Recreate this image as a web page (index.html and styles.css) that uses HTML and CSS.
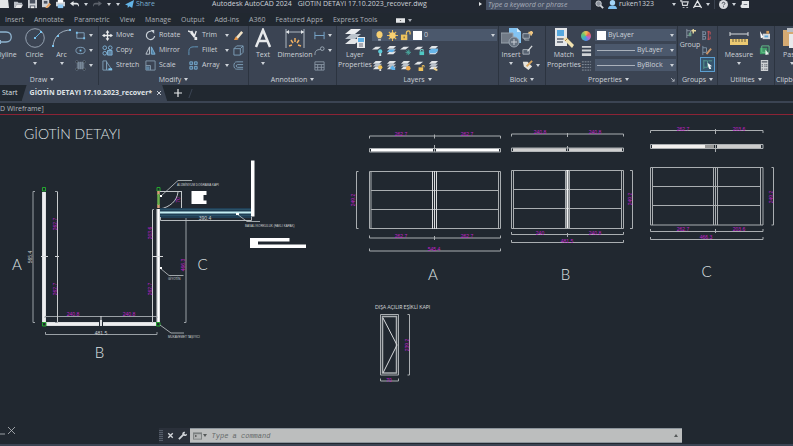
FILE: index.html
```html
<!DOCTYPE html>
<html lang="en">
<head>
<meta charset="utf-8">
<meta name="viewport" content="width=device-width, initial-scale=1">
<title>Autodesk AutoCAD 2024</title>
<link rel="stylesheet" href="styles.css">
</head>
<body>
<svg class="sprite" aria-hidden="true">
  <symbol id="caret" viewBox="0 0 4 3"><path d="M0 0h4L2 3z" fill="currentColor"/></symbol>
  <symbol id="sheets" viewBox="0 0 12 12"><path d="M1 4l3-3h7L8 4z" fill="#e2e5e8"/><path d="M1 7l3-3h7L8 7z" fill="#b9c1ca"/><path d="M1 10l3-3h7l-3 3z" fill="#e2e5e8"/></symbol>
  <symbol id="sheet" viewBox="0 0 12 12"><path d="M0 5l4-3h6L6 5z" fill="#e2e5e8"/></symbol>
  <symbol id="bulb" viewBox="0 0 10 12"><path d="M5 1a4 4 0 0 0-2 7v1h4V8a4 4 0 0 0-2-7z" fill="#f6cf72"/><path d="M3.500 10h3v1.500h-3z" fill="#d0d3d6"/></symbol>
  <symbol id="lock" viewBox="0 0 12 12"><path d="M1 5h7v6H1z" fill="#eec35c"/><path d="M7 5V3a2 2 0 0 1 4 0v2" fill="none" stroke="#eec35c" stroke-width="1.400"/><path d="M4 7h1v2H4z" fill="#444"/></symbol>
  <symbol id="sun" viewBox="0 0 12 12"><path d="M6 0v12M0 6h12M2 2l8 8M10 2l-8 8" stroke="#eabb58" stroke-width="1.200"/><circle cx="6" cy="6" r="3.500" fill="#f6cf72"/></symbol>
</svg>

<div class="app">
  <header class="titlebar">
    <div class="quick">
      <button aria-label="New"><svg viewBox="0 0 10 10"><path d="M0 0h9l1 9H0z" fill="#e4e6e8"/></svg></button>
      <button aria-label="Open"><svg viewBox="0 0 10 10"><path d="M0 2h4l1 1h4v2H3L1 9H0z" fill="#b9bec5"/><path d="M3 5h7L8 9H1z" fill="#e8e9eb"/></svg></button>
      <button aria-label="Save"><svg viewBox="0 0 10 10"><path d="M0 0h10v9H0z" fill="#cdd1d6"/><path d="M2 0h6v4H2zM2 6h6v3H2z" fill="#4a5260"/><path d="M3 7h4v2H3z" fill="#eee"/></svg></button>
      <button aria-label="Save as"><svg viewBox="0 0 10 10"><path d="M0 0h8v8H0z" fill="#cdd1d6"/><path d="M2 1h4v3H2z" fill="#4a5260"/><path d="M4 8l4-5 2 2-4 4H4z" fill="#e8a565"/></svg></button>
      <button aria-label="Plot"><svg viewBox="0 0 10 10"><path d="M0 2h10v5H0z" fill="#cdd1d6"/><path d="M2 0h6v3H2z" fill="#fff"/><path d="M2 5h6v4H2z" fill="#8fc8f2"/></svg></button>
      <button aria-label="Undo"><svg viewBox="0 0 10 10"><path d="M0 4l4-3v2h3c2 0 3 1 3 4H9c0-2-1-2-2-2H4v2z" fill="#e4e6e8"/></svg></button>
      <svg class="caret"><use href="#caret"/></svg>
      <button class="dim" aria-label="Redo"><svg viewBox="0 0 10 10"><path d="M10 4L6 1v2H3C1 3 0 4 0 7h1c0-2 1-2 2-2h3v2z" fill="#b0b5bd"/></svg></button>
      <svg class="caret"><use href="#caret"/></svg>
      <svg class="caret"><use href="#caret"/></svg>
      <button class="share"><svg viewBox="0 0 10 10"><path d="M0 5l10-5-2 9-3-2-2 2V6z" fill="#63b3e6"/></svg>Share</button>
    </div>
    <div class="doc-title"><span>Autodesk AutoCAD 2024</span><span>GİOTİN DETAYI 17.10.2023_recover.dwg</span></div>
    <div class="account">
      <svg class="play" viewBox="0 0 3 4"><path d="M0 0l3 2-3 2z" fill="#e4e6e8"/></svg>
      <input type="text" aria-label="Search help" placeholder="Type a keyword or phrase">
      <button aria-label="Search"><svg viewBox="0 0 10 10"><circle cx="4" cy="4" r="3" fill="#8b919b" stroke="#d5d8dc"/><path d="M6 6l3 3" stroke="#d5d8dc" stroke-width="2"/></svg></button>
      <button class="user"><svg viewBox="0 0 10 10"><circle cx="5" cy="3" r="3" fill="#a3d4f7"/><path d="M0 10c0-3 2-4 5-4s5 1 5 4z" fill="#7fc0f0"/></svg>ruken1323</button>
      <svg class="caret"><use href="#caret"/></svg>
      <button aria-label="Store"><svg viewBox="0 0 10 10"><path d="M0 1h2l1 5h5l1-4H3" fill="none" stroke="#d5d8dc" stroke-width="1.300"/><path d="M3 8h2v1H3zM7 8h2v1H7z" fill="#d5d8dc"/></svg></button>
      <button aria-label="Apps"><svg viewBox="0 0 10 10"><path d="M1 8l4-7 4 7-2-1H3z" fill="none" stroke="#e4e6e8" stroke-width="1.400"/></svg></button>
      <svg class="caret"><use href="#caret"/></svg>
      <span class="rule"></span>
      <button aria-label="Help"><svg viewBox="0 0 10 10"><circle cx="5" cy="5" r="5" fill="#d8dade"/><path d="M3.500 4c0-2 3-2 3 0 0 1-1.500 1-1.500 2M5 7v1" fill="none" stroke="#333a45"/></svg></button>
      <svg class="caret"><use href="#caret"/></svg>
      <button aria-label="Messages"><svg viewBox="0 0 10 10"><path d="M2 1h8v8H3C0 9 0 5 2 5z" fill="#e4e6e8"/><path d="M4 5h4" stroke="#6a717c"/></svg></button>
    </div>
  </header>

  <nav class="menu">
    <a href="#">Insert</a><a href="#">Annotate</a><a href="#">Parametric</a><a href="#">View</a><a href="#">Manage</a><a href="#">Output</a><a href="#">Add-ins</a><a href="#">A360</a><a href="#">Featured Apps</a><a href="#">Express Tools</a>
    <button aria-label="Ribbon display"><svg class="ribbon-mode" viewBox="0 0 10 5"><path d="M0 0h10v5H0z" fill="#e4e6e8"/><path d="M4 3l1-1 1 1z" fill="#333"/></svg><svg class="caret"><use href="#caret"/></svg></button>
  </nav>

  <div class="ribbon">
    <section class="panel draw">
      <div class="tools">
        <button class="big"><svg viewBox="0 0 20 20"><path d="M0 4h12c7 0 7 10 0 10H4" fill="none" stroke="#8fb4d0" stroke-width="1.300"/><path d="M3 12h4v4H3z" fill="#8fb4d0"/></svg>Polyline</button>
        <button class="big"><svg viewBox="0 0 20 20"><circle cx="10" cy="10" r="9.300" fill="none" stroke="#a9b8c6" stroke-width=".8"/><path d="M10 10l6-6" stroke="#5eacdc"/><path d="M9 9h2v2H9zM15 3h2v2h-2z" fill="#79c2ee"/></svg>Circle<svg class="caret"><use href="#caret"/></svg></button>
        <button class="big"><svg viewBox="0 0 20 20"><path d="M1 18C2 9 8 2 19 2" fill="none" stroke="#a9b8c6" stroke-width=".9"/><path d="M0 17h2v2H0zM5 7h2v2H5zM17 1h2v2h-2z" fill="#79c2ee"/></svg>Arc<svg class="caret"><use href="#caret"/></svg></button>
        <div class="stack">
          <button class="tool" aria-label="Rectangle"><svg viewBox="0 0 12 12"><path d="M2 3h8v6H2z" fill="none" stroke="#84a5bf"/><path d="M1 2h2v2H1zM9 8h2v2H9z" fill="#79c2ee"/></svg><svg class="caret"><use href="#caret"/></svg></button>
          <button class="tool" aria-label="Ellipse"><svg viewBox="0 0 12 12"><ellipse cx="6" cy="6" rx="5" ry="3.500" fill="none" stroke="#84a5bf"/><path d="M5 5h2v2H5z" fill="#79c2ee"/></svg><svg class="caret"><use href="#caret"/></svg></button>
          <button class="tool" aria-label="Hatch"><svg viewBox="0 0 12 12"><path d="M2 2h8v8H2z" fill="#667483"/><path d="M1 1h2v2H1zM9 1h2v2H9zM1 9h2v2H1zM9 9h2v2H9zM4 2v8M6 2v8M8 2v8" stroke="#91a3b4" stroke-width=".5"/></svg><svg class="caret"><use href="#caret"/></svg></button>
        </div>
      </div>
      <button class="caption">Draw<svg class="caret"><use href="#caret"/></svg></button>
    </section>

    <section class="panel modify">
      <div class="tools">
        <div class="stack">
          <button class="tool"><svg viewBox="0 0 12 12"><path d="M6 1v10M1 6h10" stroke="#e8eaec" stroke-width="1.400"/><path d="M6 0l2 3H4zM6 12l2-3H4zM0 6l3-2v4zM12 6L9 4v4z" fill="#e8eaec"/></svg>Move</button>
          <button class="tool"><svg viewBox="0 0 12 12"><g fill="none" stroke="#7fb2d6"><circle cx="3" cy="3" r="2"/><circle cx="9" cy="3" r="2"/><circle cx="3" cy="9" r="2"/><path d="M6 6h5v5H6z" fill="#5f83a0"/></g></svg>Copy</button>
          <button class="tool"><svg viewBox="0 0 12 12"><path d="M1 1h4v10H1zM5 11V2l6 9z" fill="none" stroke="#7f9fb8"/><path d="M7 10h4" stroke="#79c2ee" stroke-width="2"/></svg>Stretch</button>
        </div>
        <div class="stack">
          <button class="tool"><svg viewBox="0 0 12 12"><path d="M7 1.500a4.500 4.500 0 1 0 3.500 5" fill="none" stroke="#c9d0d7" stroke-width="1.300"/><path d="M6 0h4v4z" fill="#c9d0d7"/></svg>Rotate</button>
          <button class="tool"><svg viewBox="0 0 12 12"><path d="M5 2v8H1z" fill="none" stroke="#c4cdd5"/><path d="M7 2v8h4z" fill="#4d7fa3" stroke="#7fb2d6"/></svg>Mirror</button>
          <button class="tool"><svg viewBox="0 0 12 12"><path d="M1 1h10v10H1zM1 6h5v5" fill="none" stroke="#8399ac"/><path d="M1 7h4v4H1z" fill="#5f83a0"/></svg>Scale</button>
        </div>
        <div class="stack wide">
          <button class="tool"><svg viewBox="0 0 12 12"><path d="M0 1l5 2M4 1l3 6M9 1L7 7M3 3l4 5" stroke="#e8eaec" stroke-width="1.500"/><path d="M7 7l3 1v3H7z" fill="#e8eaec"/></svg><span>Trim</span><svg class="caret"><use href="#caret"/></svg></button>
          <button class="tool"><svg viewBox="0 0 12 12"><path d="M1 11V7c0-4 2-5 6-5h4" fill="none" stroke="#659bc1"/></svg><span>Fillet</span><svg class="caret"><use href="#caret"/></svg></button>
          <button class="tool"><svg viewBox="0 0 12 12"><path d="M2 2h3v3H2zM7 2h3v3H7zM2 7h3v3H2zM7 7h3v3H7z" fill="#426582" stroke="#78a9cb"/></svg><span>Array</span><svg class="caret"><use href="#caret"/></svg></button>
        </div>
        <div class="stack">
          <button class="tool" aria-label="Erase"><svg viewBox="0 0 12 12"><path d="M3 8l6-7 2 2-6 7z" fill="#f0e2c6"/><path d="M3 7l3 3-2 1H1z" fill="#e79545"/></svg></button>
          <button class="tool" aria-label="Explode"><svg viewBox="0 0 12 12"><path d="M1 4h7v7H1zM1 4l3-3h7L8 4M11 1v7l-3 3" fill="none" stroke="#7fa1bb"/></svg></button>
          <button class="tool" aria-label="Offset"><svg viewBox="0 0 12 12"><path d="M11 2H4C0 2 0 10 4 10h7M11 5H5c-2 0-2 3 0 3h6" fill="none" stroke="#7fa1bb"/></svg></button>
        </div>
      </div>
      <button class="caption">Modify<svg class="caret"><use href="#caret"/></svg></button>
    </section>

    <section class="panel annotation">
      <div class="tools">
        <button class="big"><svg viewBox="0 0 20 20"><path d="M3 19L10 2l7 17M6 13h8" fill="none" stroke="#e6e8ea" stroke-width="2.500"/></svg>Text<svg class="caret"><use href="#caret"/></svg></button>
        <button class="big"><svg viewBox="0 0 20 20"><path d="M1 1v19M19 1v19M1 4h18" fill="none" stroke="#aeb7c1"/><path d="M1 4l3-2v4zM19 4l-3-2v4z" fill="#e2e5e8"/><path d="M4 18l3-1M6 12l2 3M10 10v4M14 12l-2 3M16 18l-3-1" stroke="#edae62" stroke-width="1.500"/></svg>Dimension</button>
        <div class="stack">
          <button class="tool" aria-label="Linear"><svg viewBox="0 0 12 12"><path d="M1 2v8M11 2v8M1 6h10" stroke="#7babcf"/></svg><svg class="caret"><use href="#caret"/></svg></button>
          <button class="tool" aria-label="Leader"><svg viewBox="0 0 12 12"><path d="M1 11c0-5 2-6 6-6" fill="none" stroke="#a0adb9"/><circle cx="9" cy="4" r="2" fill="none" stroke="#a0adb9"/></svg><svg class="caret"><use href="#caret"/></svg></button>
          <button class="tool" aria-label="Table"><svg viewBox="0 0 12 12"><path d="M1 2h10v9H1zM1 5h10M1 8h10M4 5v6M8 5v6" fill="none" stroke="#8996a4"/></svg></button>
        </div>
      </div>
      <button class="caption">Annotation<svg class="caret"><use href="#caret"/></svg></button>
    </section>

    <section class="panel layers">
      <div class="tools">
        <button class="big"><svg viewBox="0 0 20 20"><path d="M0 6l6-5h10l-6 5z" fill="#eceef0"/><path d="M0 11l6-5h10l-6 5z" fill="#bcc4cc"/><path d="M0 16l6-5h10l-6 5z" fill="#e2e5e8"/><path d="M12 9h8v11h-8z" fill="#e8eaec"/><path d="M13 10h6v4h-6z" fill="#5dade2"/><path d="M14 16h4M14 18h4" stroke="#667"/></svg>Layer<br>Properties</button>
        <div class="stack">
          <label class="combo"><svg class="glyph"><use href="#bulb"/></svg><svg class="glyph"><use href="#sun"/></svg><svg class="glyph"><use href="#lock"/></svg><i class="swatch"></i><select aria-label="Layer"><option>0</option></select><svg class="caret"><use href="#caret"/></svg></label>
          <div class="icons">
            <button aria-label="Off"><svg viewBox="0 0 12 12"><use href="#sheet"/><circle cx="9" cy="7" r="2.300" fill="#5ccbd8"/><path d="M8 9h2v3H8z" fill="#b8dce0"/></svg></button>
            <button aria-label="Isolate"><svg viewBox="0 0 12 12"><use href="#sheets"/><path d="M1 7l3-2h6L7 8z" fill="#5db0e8"/></svg></button>
            <button aria-label="Freeze"><svg viewBox="0 0 12 12"><use href="#sheet"/><path d="M9 5v6M6 8h6M7 6l4 4M11 6l-4 4" stroke="#4aa99f"/></svg></button>
            <button aria-label="Lock"><svg viewBox="0 0 12 12"><use href="#sheet"/><path d="M6 7h5v4H6z" fill="#4fc8c4"/><path d="M7 7V5h3v2" fill="none" stroke="#83d2d2"/></svg></button>
            <button aria-label="Make current"><svg viewBox="0 0 12 12"><use href="#sheets"/><path d="M1 8V6l3-2h7v2L8 9H1z" fill="#67b5e8"/></svg></button>
          </div>
          <div class="icons">
            <button aria-label="On"><svg viewBox="0 0 12 12"><use href="#sheets"/><circle cx="9" cy="8" r="2.300" fill="#f0c155"/><path d="M8 10h2v2H8z" fill="#ddd"/></svg></button>
            <button aria-label="Unisolate"><svg viewBox="0 0 12 12"><use href="#sheets"/><path d="M4 9l3-3 3 3v2H7z" fill="#5db0e8"/></svg></button>
            <button aria-label="Thaw"><svg viewBox="0 0 12 12"><use href="#sheets"/><circle cx="9" cy="9" r="2.500" fill="#eda94d"/></svg></button>
            <button aria-label="Unlock"><svg viewBox="0 0 12 12"><use href="#sheet"/><path d="M5 8h5v4H5z" fill="#efc25b"/><path d="M9 8V6h2v2" fill="none" stroke="#efc25b"/></svg></button>
            <button aria-label="Match"><svg viewBox="0 0 12 12"><use href="#sheets"/><path d="M7 8l4 3-2 1-3-2z" fill="#f0d28b"/></svg></button>
          </div>
        </div>
      </div>
      <button class="caption">Layers<svg class="caret"><use href="#caret"/></svg></button>
    </section>

    <section class="panel block">
      <div class="tools">
        <button class="big"><svg viewBox="0 0 20 20"><path d="M8 0h8l4 4v11H8z" fill="#83c4f3"/><path d="M16 0v4h4z" fill="#d7edfb"/><path d="M0 5h12v10H0z" fill="#717a86" stroke="#98a1ab"/><circle cx="13" cy="14" r="5" fill="#66717f" stroke="#99a4b0"/><path d="M13 11v6M10 14h6" stroke="#c8ced5"/></svg>Insert<svg class="caret"><use href="#caret"/></svg></button>
        <div class="stack">
          <button class="tool" aria-label="Create block"><svg viewBox="0 0 12 12"><path d="M1 4h7v5H1zM3 9v2h5" fill="#566170" stroke="#a9b1ba"/><path d="M10 1v5M7 3h5" stroke="#f0c783" stroke-width="2"/></svg></button>
          <button class="tool" aria-label="Edit block"><svg viewBox="0 0 12 12"><path d="M1 5h7v5H1z" fill="#566170" stroke="#a9b1ba"/><path d="M6 7l5-6" stroke="#d6d9dc" stroke-width="1.500"/></svg></button>
          <button class="tool" aria-label="Attributes"><svg viewBox="0 0 12 12"><path d="M1 2h5l5 5-4 4-5-4z" fill="#e5e3dc"/><path d="M5 7l6-6" stroke="#d9a55d" stroke-width="2"/></svg><svg class="caret"><use href="#caret"/></svg></button>
        </div>
      </div>
      <button class="caption">Block<svg class="caret"><use href="#caret"/></svg></button>
    </section>

    <section class="panel properties">
      <div class="tools">
        <button class="big"><svg viewBox="0 0 20 20"><path d="M1 0h12v18H1z" fill="#e4e6e8"/><path d="M3 2h7v6H3z" fill="#57a9df"/><path d="M3 11h7M3 14h6" stroke="#59616d" stroke-width="1.500"/><path d="M9 11l3-2 8 8-2 3z" fill="#f2e2af"/><path d="M11 13l3-3" stroke="#b28a48"/></svg>Match<br>Properties</button>
        <div class="stack swatches">
          <span class="wheel"></span>
          <svg class="glyph" viewBox="0 0 12 12"><path d="M1 1h10v2H1zM1 5h10v2H1zM1 9h10v3H1z" fill="#d1d3d6"/></svg>
          <svg class="glyph" viewBox="0 0 12 12"><path d="M1 2h10M1 5h10M1 8h10M1 11h10" stroke="#8b95a1" stroke-dasharray="2 1"/></svg>
        </div>
        <div class="stack grow">
          <label class="combo"><i class="swatch"></i><select aria-label="Object color"><option>ByLayer</option></select><svg class="caret"><use href="#caret"/></svg></label>
          <label class="combo"><i class="line"></i><select aria-label="Lineweight"><option>ByLayer</option></select><svg class="caret"><use href="#caret"/></svg></label>
          <label class="combo"><i class="line"></i><select aria-label="Linetype"><option>ByBlock</option></select><svg class="caret"><use href="#caret"/></svg></label>
        </div>
      </div>
      <div class="caption-row">
        <button class="caption">Properties<svg class="caret"><use href="#caret"/></svg></button>
        <button class="launcher" aria-label="Properties palette"><svg viewBox="0 0 5 5"><path d="M0 0l4 4M4 1v3H1" fill="none" stroke="#b5bbc3"/></svg></button>
      </div>
    </section>

    <section class="panel groups">
      <div class="tools">
        <button class="big small-icon"><svg viewBox="0 0 12 12"><path d="M2 1v10M2 3h4v5H2" fill="none" stroke="#8d99a6"/><path d="M4 5h3v4H4z" fill="#6e9f89"/><path d="M9 1v5M7 3h5" stroke="#e8d9a0" stroke-width="1.500"/></svg>Group</button>
        <div class="stack">
          <button class="tool" aria-label="Ungroup"><svg viewBox="0 0 12 12"><path d="M2 1v10M2 2h3v3H2M2 7h3v3H2" fill="none" stroke="#8094a7"/><path d="M8 1v10M7 2h3v3M7 10h3V7" fill="none" stroke="#c9545b"/></svg></button>
          <button class="tool" aria-label="Group edit"><svg viewBox="0 0 12 12"><path d="M2 1v10M2 3h4v5H2" fill="none" stroke="#8094a7"/><path d="M6 10l5-6" stroke="#c99568" stroke-width="2"/></svg></button>
          <button class="tool active" aria-label="Group selection"><svg viewBox="0 0 12 12"><path d="M2 1v10M2 2h4v7H2M7 2h4" fill="none" stroke="#559a91"/><path d="M6 4l5 4H9l1 3H8L7 9z" fill="#f1f4f6"/></svg></button>
        </div>
      </div>
      <button class="caption">Groups<svg class="caret"><use href="#caret"/></svg></button>
    </section>

    <section class="panel utilities">
      <div class="tools">
        <button class="big"><svg viewBox="0 0 20 20"><path d="M1 6h18M1 4v4M19 4v4" stroke="#d9dce0"/><path d="M1 11h18v6H1z" fill="#ecca72"/><path d="M4 11v3M7 11v3M10 11v3M13 11v3M16 11v3" stroke="#6c603e"/></svg>Measure<svg class="caret"><use href="#caret"/></svg></button>
        <div class="stack">
          <button class="tool" aria-label="Quick select"><svg viewBox="0 0 12 12"><path d="M4 4h8v6H4z" fill="#d5d9dd"/><path d="M6 6h4v2H6z" fill="#5da5d5"/><path d="M1 1l4 7-3 1z" fill="#fff"/><path d="M8 1h3v3H8z" fill="#d29a58"/></svg></button>
          <button class="tool" aria-label="Select all"><svg viewBox="0 0 12 12"><path d="M1 3h8v7H1z" fill="#3f9a67"/><path d="M3 1h8v7H3z" fill="none" stroke="#64c48b"/><path d="M7 5l4 5-4 1z" fill="#e6efe9"/></svg></button>
          <button class="tool" aria-label="Calculator"><svg viewBox="0 0 12 12"><path d="M2 0h8v12H2z" fill="#cfd2d5"/><path d="M3 2h6M3 5h1M6 5h1M8 5h1M3 7h1M6 7h1M8 7h1M3 10h1M6 10h1M8 10h1" stroke="#505762" stroke-width="1.500"/></svg></button>
        </div>
      </div>
      <button class="caption">Utilities<svg class="caret"><use href="#caret"/></svg></button>
    </section>

    <section class="panel clipboard">
      <div class="tools">
        <button class="big"><svg viewBox="0 0 20 20"><path d="M1 2h15v16H1z" fill="#d5aa72"/><path d="M5 0h7v4H5z" fill="#b9bec4"/><path d="M7 6h12v14H7z" fill="#e9eaec"/></svg>Paste<svg class="caret"><use href="#caret"/></svg></button>
      </div>
      <button class="caption">Clipboard</button>
    </section>
  </div>

  <nav class="files">
    <a href="#">Start</a>
    <div class="file"><a href="#">GİOTİN DETAYI 17.10.2023_recover*</a><button aria-label="Close file"><svg viewBox="0 0 6 6"><path d="M1 1l4 4M5 1L1 5" stroke="#c9ced5"/></svg></button></div>
    <button class="plus" aria-label="New drawing"><svg viewBox="0 0 10 10"><path d="M5 1v8M1 5h8" stroke="#e8eaec" stroke-width="1.200"/></svg></button>
    <span class="slash"></span>
  </nav>

  <main class="workspace">
    <div class="view-label"><span>D Wireframe]</span></div>
    <svg class="drawing" viewBox="0 115 793 329" preserveAspectRatio="xMinYMin meet" role="img" aria-label="Giotin detail drawing">
      <g class="letters">
        <text x="24" y="139" class="heading">GİOTİN DETAYI</text>
        <g text-anchor="middle">
          <text x="17" y="270">A</text><text x="99.500" y="358">B</text><text x="202.500" y="269.500">C</text>
          <text x="433" y="280">A</text><text x="565.500" y="280">B</text><text x="706.500" y="277">C</text>
        </g>
      </g>

      <!-- Plan: walls -->
      <g fill="#dcdee0">
        <path d="M42 192h4v130h-4zM156.500 209h3.500v113h-3.500zM46 322h53v4H46zM103 322h53v4h-53zM100 320h2v6h-2z"/>
      </g>
      <path d="M44 192v130M158.500 209v113M46 324h53M103 324h53" stroke="#fff" fill="none"/>
      <g fill="none" stroke="#9aa0a5">
        <path d="M35 191.500h-2v131h2M55 191.500h2.500v131H55M154 209.500h-1.500v113M45 318v-1.500h112v1.500M45.500 332v2.500h111.500v-2.500M184 209.500h2v113h-2"/>
        <path d="M41 256.500h7M55 256.500h4M152 256.500h11M101 316v4" stroke="#d8dadc"/>
      </g>
      <path d="M57.500 192v130M152.500 210v112" stroke="#c9ccce"/>
      <path d="M42.500 187.500h3v3.500h-3zM157 187.500h3v3.500h-3zM42.500 322.500h3.500v3.500h-3.500zM156.500 322.500h3.500v3.500h-3.500z" fill="none" stroke="#24a62f"/>
      <path d="M158.500 191v4M158.500 204v4" stroke="#d8a078" stroke-width="2.500"/>
      <path d="M158.500 194v11" stroke="#6bb04c" stroke-width="2.500"/>
      <path d="M160 191.500h22M181.500 191v18M180 209h3M178 192c-1 9-8 15-18 17" fill="none" stroke="#c3c7ca"/>
      <path d="M160 208h91v10h-91z" fill="#203e54"/>
      <path d="M160 209.500h91M160 215.500h91" stroke="#2b5268"/>
      <path d="M160 212.500h91" stroke="#c4edf2" stroke-width="2"/>
      <path d="M160.500 217v3.500h91V217" fill="none" stroke="#b5babd"/>
      <path d="M251 160.500h3.500v56H251z" fill="#fff"/>
      <path d="M191.500 191h15v4h-3v5.500h3v3.500h-15zM250 238h39.500v3.500H258v3h48v3.500h-56z" fill="#fff"/>
      <g fill="none" stroke="#c2c6c9" stroke-width=".8">
        <path d="M161 196l17-15.500h14M237 214l10 7.500h13M160 268l9 7.500h14.500M160 325l11 8h13"/>
      </g>
      <path d="M160 195h2v2h-2zM236 213h3v2h-3zM160 267h2v2h-2z" fill="#fff"/>

      <!-- Elevation A -->
      <g class="steel">
        <path d="M369.500 138.500v-2.500h131v2.500M434.500 134.500v4M369.500 235.500v2.500h131v-2.500M434.500 236v4M369.500 248.500v2.500h131v-2.500"/>
        <path d="M358.500 171.500h-2v57h2M369.500 171.500h131v57h-131zM371 171.500v57M498.500 171.500v57M371 190.500h127M371 209.500h127"/>
        <path d="M432.500 171v58M434.500 171v58M436.500 171v58" stroke="#d8dadc"/>
        <path d="M369.500 148.500h131v3.500h-131zM434.500 145v7"/>
      </g>
      <path d="M371 150.300h62M436 150.300h63" stroke="#fff" stroke-width="2.500"/>

      <!-- Elevation B -->
      <g class="steel">
        <path d="M511.500 136.500v-2.500h112v2.500M567.500 133v4M511.500 232v2.500h112V232M567.500 233v4M511.500 240v2.500h112V240"/>
        <path d="M630 170.500h2.500v58H630M511.500 170.500h112v58h-112zM513.500 170.500v58M621.500 170.500v58M513 189.500h108M513 208.500h108"/>
        <path d="M565.500 170v58M569.500 170v58"/><path d="M567.500 170v58" stroke="#f2f3f3" stroke-width="2"/>
        <path d="M511.500 148h112v3.500h-112zM567.500 146v6"/>
      </g>
      <path d="M513 149.800h53M569 149.800h53" stroke="#cfcfcf" stroke-width="3"/>

      <!-- Elevation C -->
      <g class="steel">
        <path d="M650.500 133v-2.500H763v2.500M715.500 129v5M650.500 229v2.500H763V229M715.500 229v4M650.500 237v2.500H763V237"/>
        <path d="M771.500 167.500h2V225h-2M650.500 167.500H763v57.500H650.500zM652.500 167.500V225M760.500 167.500V225M652 186.500h109M652 205.500h109"/>
        <path d="M713.500 167v58M715.500 167v58M717.500 167v58"/>
        <path d="M650.500 144.500H763v4H650.500zM715.500 144v8"/>
      </g>
      <path d="M652 146.500h53" stroke="#f2f0ee" stroke-width="3"/><path d="M705 146.500h9" stroke="#999" stroke-width="3"/><path d="M717 146.500h44" stroke="#ccc" stroke-width="3"/>

      <!-- Door -->
      <g class="steel">
        <path d="M380.500 314.500h18v60.500h-18z"/><path d="M382.500 316.500h14v56.500h-14z" stroke-width="1.500"/>
        <path d="M383 318l14 27-14 28" stroke="#d8dadc"/>
        <path d="M407.500 314.500h2V375h-2M380.500 378.500v2.500h18v-2.500"/>
      </g>

      <g class="note">
        <text x="177" y="186">ALÜMİNYUM DOĞRAMA KAPI</text>
        <text x="245" y="227">BASALI KORKULUK (FAKLI KAPAK)</text>
        <text x="168" y="280">GİYOTİN</text>
        <text x="168" y="338">MUKAVEMET TAŞIYICI</text>
        <text x="375" y="309" class="door">DIŞA AÇILIR EŞİKLİ KAPI</text>
      </g>
      <g class="size white">
        <text x="205" y="220">390.4</text><text x="101" y="335">481.5</text>
        <text transform="translate(32 257) rotate(-90)">565.4</text>
      </g>
      <g class="size">
        <text x="401" y="136">262.7</text><text x="467" y="136">262.7</text><text x="401" y="238">262.7</text><text x="467" y="238">262.7</text><text x="434" y="251">545.4</text>
        <text x="540" y="134">240.8</text><text x="595" y="134">240.8</text><text x="540" y="235">240</text><text x="595" y="235">240.8</text><text x="567" y="243">481.5</text>
        <text x="683" y="131">262.7</text><text x="739" y="131">203.6</text><text x="683" y="231">262.7</text><text x="739" y="231">203.6</text><text x="706" y="239">466.3</text>
        <text x="73" y="316">240.8</text><text x="129" y="316">240.8</text><text x="389" y="382">70</text>
        <text transform="translate(57 224) rotate(-90)">262.7</text><text transform="translate(57 289) rotate(-90)">262.7</text>
        <text transform="translate(152 233) rotate(-90)">203.6</text><text transform="translate(152 289) rotate(-90)">262.7</text>
        <text transform="translate(180 200) rotate(-90)">70</text><text transform="translate(185 265) rotate(-90)">466.3</text>
        <text transform="translate(355 200) rotate(-90)">249.2</text><text transform="translate(632 199) rotate(-90)">249.2</text><text transform="translate(773 197) rotate(-90)">249.2</text><text transform="translate(409 345) rotate(-90)">239.2</text>
      </g>
      <path d="M0 434h5M8 427l7 7M15 427l-7 7" stroke="#b9bdc1" fill="none" stroke-width=".8"/>
    </svg>
    <form class="command">
      <span class="grip"></span>
      <button type="button" aria-label="Close command line"><svg viewBox="0 0 8 8"><path d="M2 2l4 4M6 2L2 6" stroke="#d5d8dc" stroke-width="1.200"/></svg></button>
      <button type="button" aria-label="Customize"><svg viewBox="0 0 10 10"><path d="M1 9l5-5" stroke="#ced2d7" stroke-width="2"/><path d="M5 4c-1-2 1-4 3-3L7 3l1 1 2-1c0 3-2 3-4 2z" fill="#ced2d7"/></svg></button>
      <label class="prompt">
        <svg class="console" viewBox="0 0 10 8"><path d="M0 0h10v8H0z" fill="#7c8080"/><path d="M1 2h8v5H1z" fill="#b5b7b7"/><path d="M2 3l2 1-2 1" fill="none" stroke="#555"/></svg>
        <svg class="caret"><use href="#caret"/></svg>
        <input type="text" aria-label="Command" placeholder="Type a command">
        <svg class="caret up"><use href="#caret"/></svg>
      </label>
    </form>
  </main>
  <footer class="status"></footer>
</div>
</body>
</html>
```

FILE: styles.css
```css
* { box-sizing: border-box; }

body {
  margin: 0;
  overflow: hidden;
  background: #212830;
  color: #cdd2d8;
  font: 7px/10px "Open Sans", "Noto Sans", sans-serif;
}

button, input, select {
  margin: 0;
  padding: 0;
  border: 0;
  background: none;
  color: inherit;
  font: inherit;
}

a { color: inherit; text-decoration: none; }
svg { flex: none; }
.sprite { display: none; }

.app {
  display: flex;
  flex-direction: column;
  height: 100vh;
}

.caret { width: 4px; height: 3px; }

/* Title bar: its upper part lies above the window edge */
.titlebar {
  display: grid;
  grid-template-columns: 212px 1fr 314px;
  align-items: center;
  flex: none;
  height: 18px;
  margin-top: -5px;
  background: #222832;
}
.titlebar button { display: flex; align-items: center; gap: 2px; }
.titlebar button svg { width: 9px; height: 9px; }
.quick { display: flex; align-items: center; gap: 5px; }
.quick .dim { opacity: .4; }
.share { color: #78add0; }
.doc-title { display: flex; gap: 6px; white-space: nowrap; }
.account { display: flex; align-items: center; gap: 4px; }
.account .play { width: 3px; height: 4px; }
.account input {
  width: 105px;
  height: 12px;
  padding-left: 2px;
  background: #465064;
}
.account ::placeholder { color: #a8aeb9; font-style: italic; opacity: 1; }
.account .user { width: 60px; }
.rule { width: 1px; height: 10px; background: #3a424f; }

.menu {
  display: flex;
  align-items: center;
  flex: none;
  gap: 10px;
  height: 14px;
  margin-bottom: -1px;
  padding-left: 5px;
  color: #a9aeb6;
  white-space: nowrap;
}
.menu button { display: flex; align-items: center; gap: 3px; margin-left: 9px; }
.ribbon-mode { width: 9px; height: 5px; }

/* Ribbon: scrolled a little to the left */
.ribbon {
  display: flex;
  flex: none;
  height: 59px;
  margin-left: -14px;
  background: #3b4453;
}
.panel {
  display: flex;
  flex-direction: column;
  flex: none;
  border-right: 1px solid #2c3440;
}
.draw { width: 113px; }
.modify { width: 150px; }
.annotation { width: 88px; }
.layers { width: 162px; }
.block { width: 47px; }
.properties { width: 132px; }
.groups { width: 40px; }
.utilities { width: 57px; }
.clipboard { flex: 1 0 34px; }

.tools { display: flex; padding: 2px 1px 0; height: 48px; }
.caption {
  display: flex;
  align-items: center;
  justify-content: center;
  gap: 3px;
  height: 11px;
}
.caption-row { display: flex; align-items: center; padding-right: 2px; }
.caption-row .caption { flex: 1; }
.launcher svg { display: block; width: 4px; height: 4px; }

.big {
  display: flex;
  flex-direction: column;
  align-items: center;
  flex: none;
  width: 34px;
  text-align: center;
  white-space: nowrap;
}
.big > svg:first-child { width: 20px; height: 20px; margin-bottom: 2px; }
.big .caret { margin-top: 2px; }
.draw .big { width: 27px; }
.draw .big:first-child { width: 34px; }
.annotation .big { width: 38px; }
.annotation .big:first-child { width: 26px; }
.block .big, .groups .big { width: 22px; }
.utilities .big { width: 40px; }
.clipboard .big { width: 32px; }
.big.small-icon > svg:first-child { width: 11px; height: 11px; margin-bottom: 1px; }

.stack { display: grid; grid-template-rows: repeat(3, 15px); align-content: start; }
.modify .tools { padding-left: 3px; }
.modify .stack { width: 43px; }
.modify .stack.wide { width: 45px; }
.modify .stack:last-child { width: 14px; }
.wide .tool span { width: 20px; text-align: left; }
.tool { display: flex; align-items: center; gap: 3px; height: 14px; }
.tool > svg:first-child { width: 11px; height: 11px; }
.tool.active { outline: 1px solid #5c9ed0; background: #36556e; width: 13px; height: 13px; justify-content: center; }

.glyph { width: 11px; height: 11px; }
.icons { display: flex; align-items: center; gap: 3px; }
.icons svg { display: block; width: 11px; height: 11px; }
.layers .stack { flex: 1; }
.grow { flex: 1; min-width: 0; }
.swatches { width: 14px; align-items: center; }
.wheel {
  width: 10px;
  height: 10px;
  border-radius: 50%;
  background: conic-gradient(#eec253, #e76259, #b965cf, #4f91e8, #45b8b0, #6fc46d, #eec253);
}
.combo {
  display: flex;
  align-items: center;
  gap: 2px;
  height: 12px;
  margin-top: 1px;
  padding: 0 2px;
  background: #4b586c;
}
.combo select { flex: 1; min-width: 0; appearance: none; }
.swatch { width: 9px; height: 9px; background: #fff; }
.line { width: 38px; height: 1px; background: #aab1bb; }

.files {
  display: flex;
  align-items: center;
  flex: none;
  height: 18px;
  padding-left: 2px;
  border-bottom: 2px solid #3b4453;
  color: #dfe2e6;
}
.file {
  display: flex;
  align-items: center;
  align-self: stretch;
  gap: 4px;
  margin-left: 4px;
  padding: 0 5px 0 8px;
  background: #3b4453;
  clip-path: polygon(5px 0, calc(100% - 5px) 0, 100% 100%, 0 100%);
  font-weight: 700;
}
.file svg { display: block; width: 6px; height: 6px; }
.plus { margin-left: 6px; }
.plus svg { display: block; width: 10px; height: 10px; }
.slash { width: 1px; height: 9px; margin-left: 7px; background: #3b4453; transform: skewX(-20deg); }

.workspace {
  position: relative;
  display: flex;
  flex-direction: column;
  flex: 1;
  min-height: 0;
}
.view-label {
  display: flex;
  align-items: flex-end;
  flex: none;
  height: 12px;
  border-bottom: 1px solid #8b2335;
  color: #b4b9bf;
}
.drawing { width: 100%; flex: 1; min-height: 0; }

.letters { fill: #dfe2e4; font: 300 15px Lato, sans-serif; }
.letters .heading { font-size: 14px; }
.steel { fill: none; stroke: #aaaeb1; }
.note { fill: #d0d3d6; font: 3px "Liberation Sans", sans-serif; }
.note .door { font: 5px Lato, sans-serif; }
.size { fill: #c31fce; font: 5px "Liberation Sans", sans-serif; text-anchor: middle; }
.white { fill: #cdd0d3; }

/* Floating command line */
.command {
  position: absolute;
  left: 20%;
  right: 14%;
  bottom: 1px;
  display: flex;
  align-items: center;
  gap: 3px;
  height: 15px;
  background: #2a303a;
}
.command button svg { display: block; width: 9px; height: 9px; }
.grip { width: 4px; height: 11px; background: repeating-linear-gradient(#555d69 0 1px, #303742 1px 2px); }
.prompt {
  display: flex;
  align-items: center;
  flex: 1;
  align-self: stretch;
  gap: 1px;
  padding: 0 4px 0 3px;
  border: solid #8c949b;
  border-width: 1px 0;
  background: #bcbebe;
  color: #555959;
}
.console { width: 9px; height: 8px; }
.prompt input { flex: 1; margin-left: 4px; font: italic 7px/10px "Liberation Mono", monospace; }
.prompt ::placeholder { color: #666a6a; opacity: 1; }
.up { transform: rotate(180deg); }

.status { flex: none; height: 2px; background: #3b4453; }
```
